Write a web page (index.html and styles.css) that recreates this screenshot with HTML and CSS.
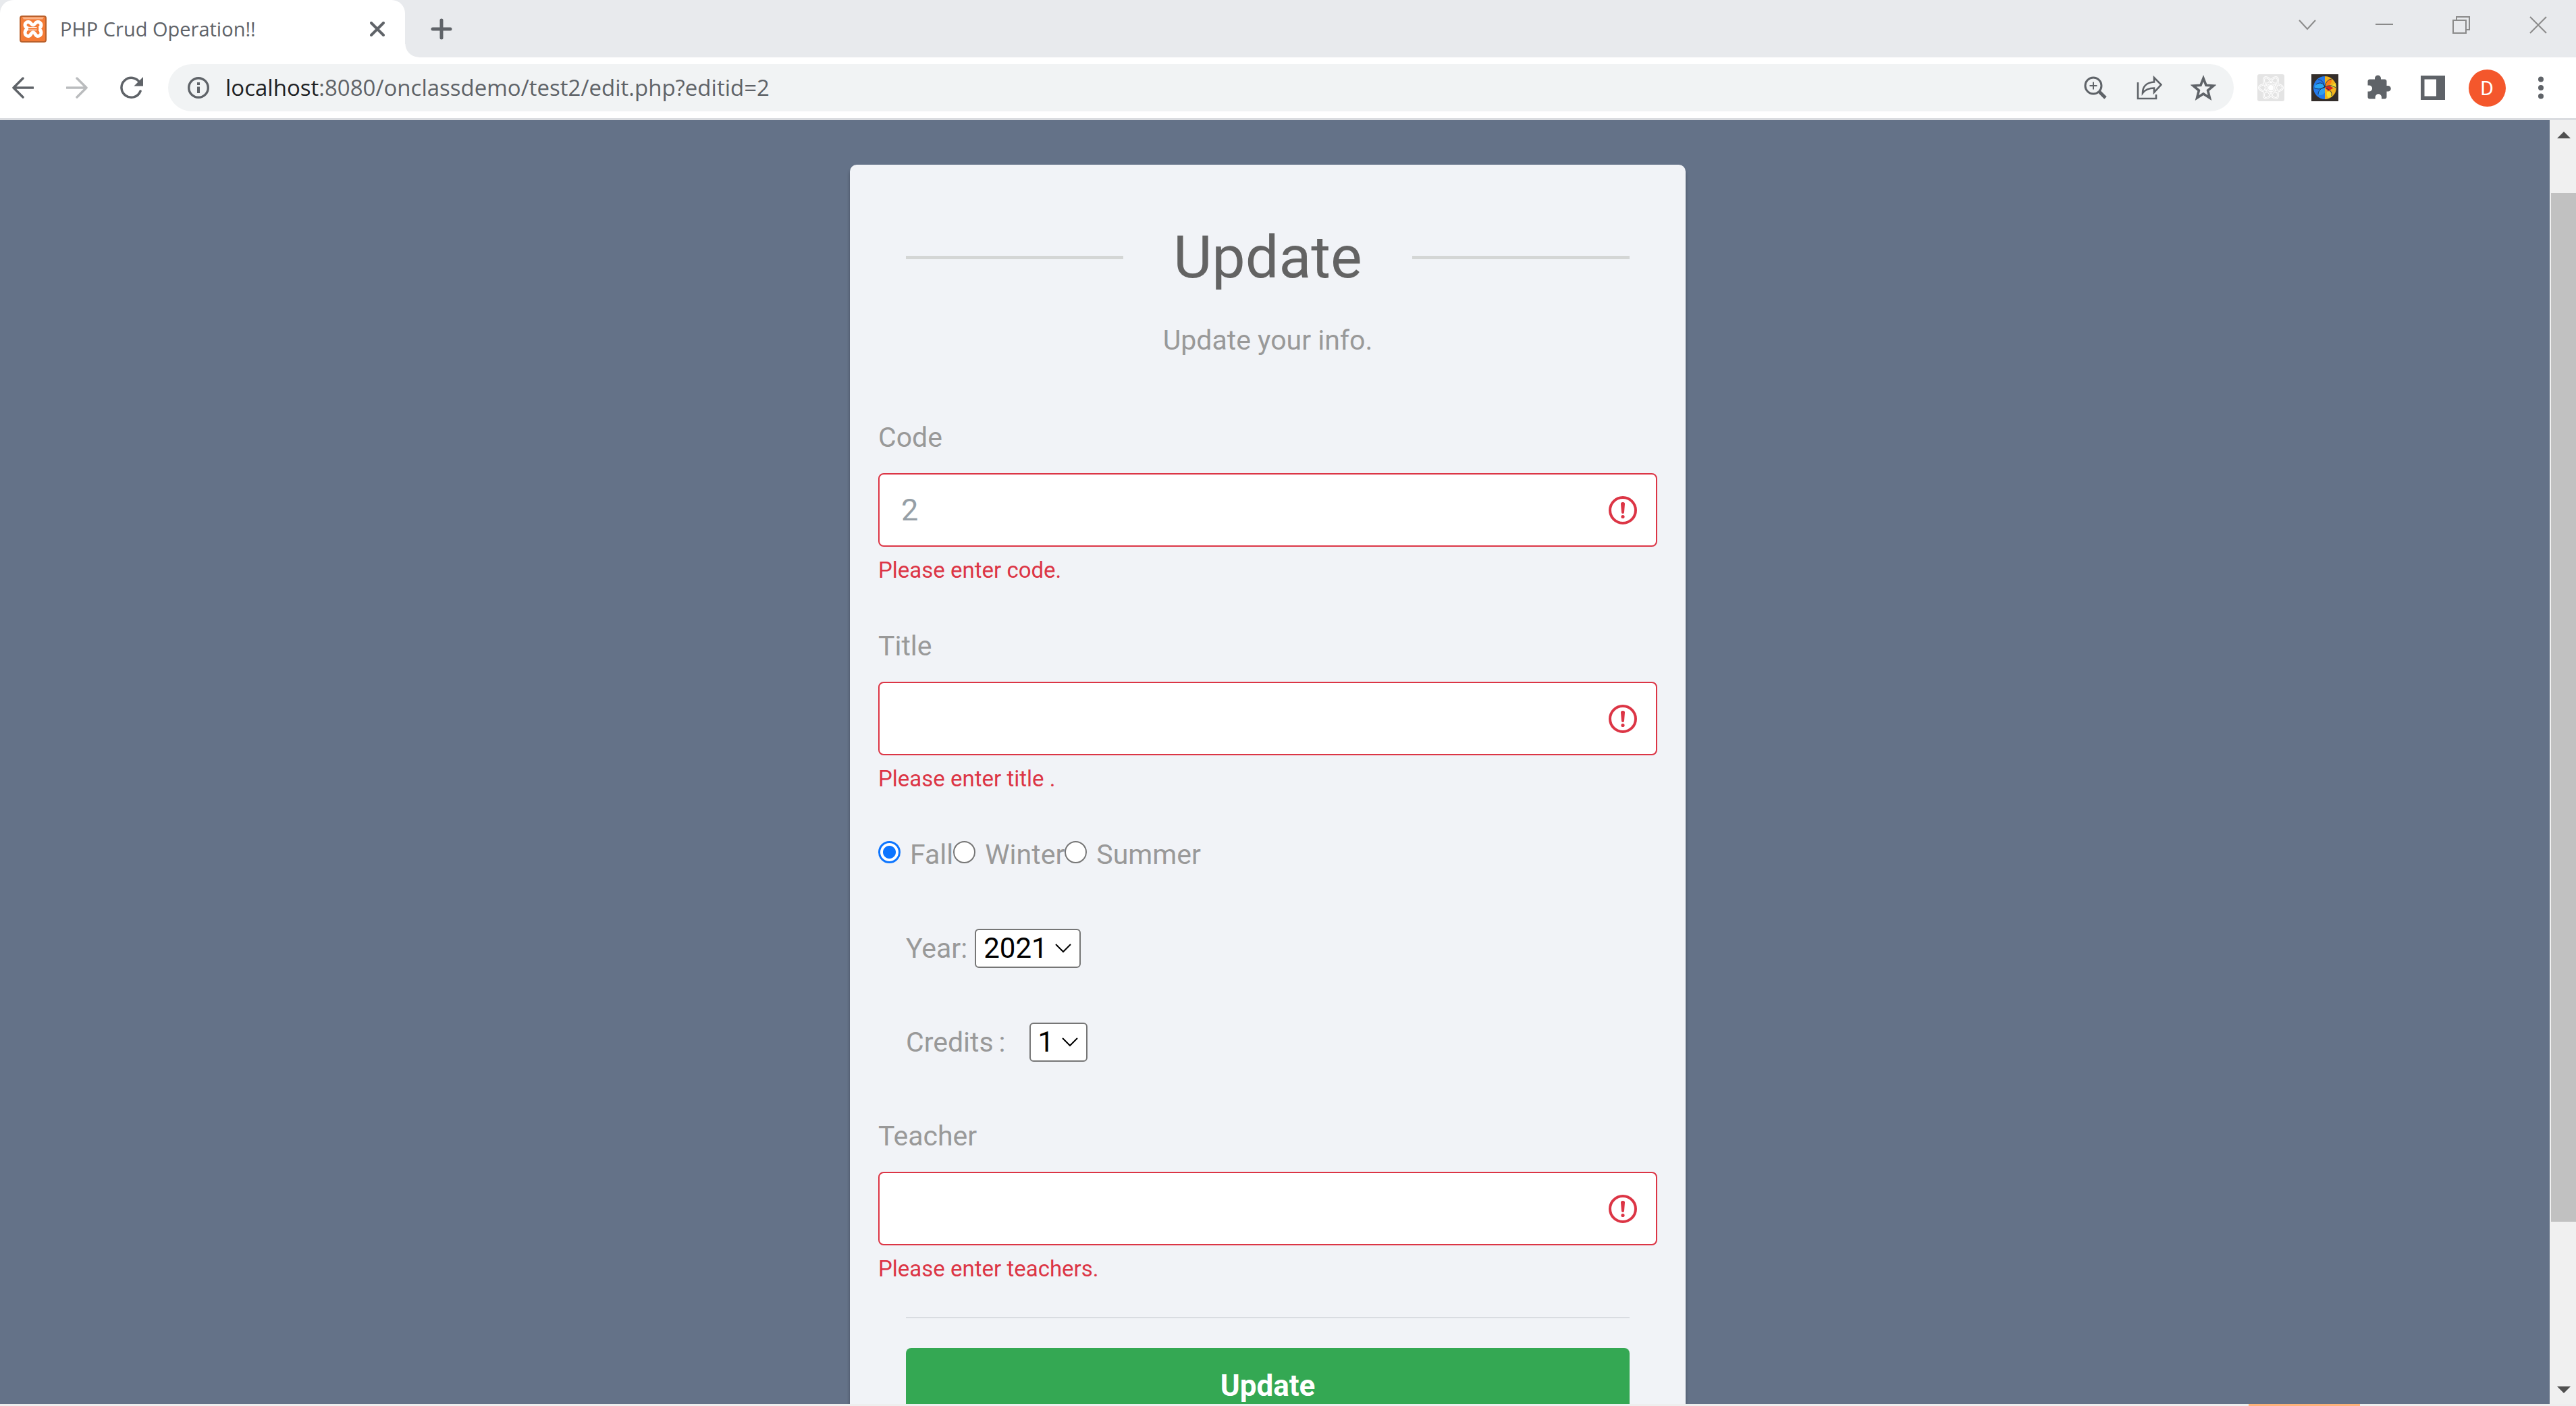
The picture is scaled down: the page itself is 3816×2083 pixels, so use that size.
FILE: index.html
```html
<!DOCTYPE html>
<html lang="en">
<head>
<meta charset="utf-8">
<title>PHP Crud Operation!!</title>
<link rel="stylesheet" href="styles.css">
</head>
<body>
<div class="browser">
  <header class="tabstrip">
    <div class="tab">
      <svg class="favicon" viewBox="0 0 40 40" aria-hidden="true">
        <rect x="1" y="1" width="38" height="38" rx="3" fill="#f47b35" stroke="#b9602b" stroke-width="2"/>
        <path d="M4 2.500h32l-2 3H6z" fill="#f9b48a"/>
        <path d="M15.500 19.500h9M15.500 19.500c-3 0-7.500-2-7.500-5.500s3-4.500 5-4.500c4 0 4 4.500 7 4.500s3-4.500 7-4.500c2 0 5 1 5 4.500s-2 4-3.500 5.500c1.500 1 3.500 2.500 3.500 6s-3 5-5 5c-4 0-3.500-5.500-7-5.500s-3 5.500-7 5.500c-2 0-5-1.500-5-5s2-5 3.500-6" fill="none" stroke="#fff" stroke-width="5" stroke-linecap="round" stroke-linejoin="round"/>
        <path d="M13 19.500h14M27 17v5" fill="none" stroke="#f47b35" stroke-width="2.500"/>
      </svg>
      <span class="tab-title">PHP Crud Operation!!</span>
      <button class="icon-button" type="button" aria-label="Close tab">
        <svg class="i22" viewBox="0 0 22 22"><path d="M2 2l18 18M20 2L2 20" stroke="#5f6368" stroke-width="4" stroke-linecap="round"/></svg>
      </button>
    </div>
    <button class="icon-button new-tab" type="button" aria-label="New tab">
      <svg class="i32" viewBox="0 0 32 32"><path d="M16 3v26M3 16h26" stroke="#5f6368" stroke-width="5" stroke-linecap="round"/></svg>
    </button>
    <div class="window-controls">
      <button class="icon-button" type="button" aria-label="Search tabs"><svg class="i26" viewBox="0 0 26 26"><path d="M1 6l12 13L25 6" fill="none" stroke="#8a8a8a" stroke-width="2"/></svg></button>
      <button class="icon-button" type="button" aria-label="Minimize"><svg class="i26" viewBox="0 0 26 26"><path d="M0 12h26" stroke="#8a8a8a" stroke-width="2"/></svg></button>
      <button class="icon-button" type="button" aria-label="Restore"><svg class="i26" viewBox="0 0 26 26"><path d="M1 6h19v19H1zM6 6V1h19v19h-5" fill="none" stroke="#8a8a8a" stroke-width="2"/></svg></button>
      <button class="icon-button" type="button" aria-label="Close"><svg class="i26" viewBox="0 0 26 26"><path d="M1 1l24 24M25 1L1 25" stroke="#8a8a8a" stroke-width="2"/></svg></button>
    </div>
  </header>

  <nav class="toolbar" aria-label="Browser toolbar">
    <div class="nav-buttons">
      <button class="icon-button" type="button" aria-label="Back"><svg class="i32" viewBox="0 0 32 32"><path d="M16 2L2 16l14 14M2 16h29" fill="none" stroke="#5f6368" stroke-width="3.500" stroke-linecap="round" stroke-linejoin="round"/></svg></button>
      <button class="icon-button" type="button" aria-label="Forward"><svg class="i32" viewBox="0 0 32 32"><path d="M16 2l14 14-14 14M30 16H1" fill="none" stroke="#babcbe" stroke-width="3.500" stroke-linecap="round" stroke-linejoin="round"/></svg></button>
      <button class="icon-button" type="button" aria-label="Reload"><svg class="i34" viewBox="0 0 34 34"><path d="M29 9.500A14.500 14.500 0 1 0 30 22" fill="none" stroke="#5f6368" stroke-width="3.500" stroke-linecap="round"/><path d="M34 1v13.500H20.500z" fill="#5f6368"/></svg></button>
    </div>
    <div class="omnibox">
      <svg class="i32" viewBox="0 0 32 32" aria-hidden="true"><circle cx="16" cy="16" r="14.300" fill="none" stroke="#5f6368" stroke-width="3.400"/><path d="M14 8h4v4h-4zM14 14.500h4V24h-4z" fill="#5f6368"/></svg>
      <span class="url"><span class="host">localhost</span>:8080/onclassdemo/test2/edit.php?editid=2</span>
      <div class="slots">
        <button class="icon-button slot" type="button" aria-label="Zoom"><svg class="i36" viewBox="0 0 36 36"><circle cx="15" cy="15" r="12" fill="none" stroke="#5f6368" stroke-width="3"/><path d="M15 9.500v11M9.500 15h11" stroke="#5f6368" stroke-width="2"/><path d="M23.500 23.500l9.500 9.500" stroke="#5f6368" stroke-width="5"/></svg></button>
        <button class="icon-button slot" type="button" aria-label="Share"><svg class="i38" viewBox="0 0 38 38"><path d="M2 11v24h27v-6" fill="none" stroke="#5f6368" stroke-width="2.600"/><path d="M9 27c0-10 6-16 17-16.500V4l10.500 10.500L26 26v-6.500c-8 0-13 2-17 7.500z" fill="none" stroke="#5f6368" stroke-width="2.600"/></svg></button>
        <button class="icon-button slot" type="button" aria-label="Bookmark this tab"><svg class="i38" viewBox="0 0 38 38"><path d="M19 5l4 10.200 11 .8-8.400 7 2.800 11L19 28l-9.400 6 2.800-11L4 16l11-.8z" fill="none" stroke="#5f6368" stroke-width="3.600"/></svg></button>
      </div>
    </div>
    <div class="slots">
      <button class="icon-button slot" type="button" aria-label="React developer tools"><svg class="i40" viewBox="0 0 40 40"><rect width="40" height="40" rx="3" fill="#e4e4e4"/><g fill="none" stroke="#fff" stroke-width="3"><ellipse cx="20" cy="20" rx="17.500" ry="6.500"/><ellipse cx="20" cy="20" rx="17.500" ry="6.500" transform="rotate(60 20 20)"/><ellipse cx="20" cy="20" rx="17.500" ry="6.500" transform="rotate(120 20 20)"/></g><g fill="none" stroke="#e4e4e4" stroke-width="1"><ellipse cx="20" cy="20" rx="17.500" ry="6.500"/><ellipse cx="20" cy="20" rx="17.500" ry="6.500" transform="rotate(60 20 20)"/><ellipse cx="20" cy="20" rx="17.500" ry="6.500" transform="rotate(120 20 20)"/></g><circle cx="20" cy="20" r="4" fill="#fff"/></svg></button>
      <button class="icon-button slot" type="button" aria-label="Brain extension"><svg class="i40" viewBox="0 0 40 40"><rect width="40" height="40" fill="#332d2a"/><path d="M20 3a17 17 0 0 0 0 34z" fill="#2479ea"/><path d="M20 3a17 17 0 0 1 0 34z" fill="#f3b31c"/><path d="M7 15c7-3 11-1 13 4-5 3-10 3-16 1z" fill="#27a5f5"/><path d="M10 30c0-6 5-10 10-10v7c-3 4-6 5-10 3z" fill="#2f9df0"/><path d="M20 19c1-8 5-12 10-12 1 6-3 10-10 12z" fill="#fb7d14"/><path d="M20 20c5-4 10-4 13 0l-8 5z" fill="#d9231c"/><path d="M28 18l8-5c1 6-1 9-8 5zM23 26c5-1 8 1 8 6l-6 3c-2-2-3-5-2-9z" fill="#f7e02d"/><path d="M4 20c6 3 11 2 16-1-2-6-7-8-13-4M10 30c0-6 5-10 10-11M10 8c6 0 8 5 10 11M30 7c-6 1-9 5-10 12 5-3 11-3 16 1M22 21c6 2 9 6 8 11" fill="none" stroke="#17345c" stroke-width="1"/></svg></button>
      <button class="icon-button slot" type="button" aria-label="Extensions"><svg class="i40" viewBox="0 0 40 40"><path d="M6.500 7.500h7.500V6a4.500 4.500 0 0 1 9 0v1.500h5.500a3 3 0 0 1 3 3V17h2a4.300 4.300 0 0 1 0 8.600h-2v8a3 3 0 0 1-3 3H24V34a4.700 4.700 0 0 0-9.400 0v2.600H6.500a3 3 0 0 1-3-3v-8H5.500a4.600 4.600 0 0 0 0-9.200h-2v-6a3 3 0 0 1 3-2.900z" fill="#5f6368"/></svg></button>
      <button class="icon-button slot" type="button" aria-label="Side panel"><svg class="i36" viewBox="0 0 36 36"><path fill-rule="evenodd" d="M0 0h36v36H0zM5.500 5.500v25H23v-25z" fill="#5f6368"/></svg></button>
      <button class="icon-button slot" type="button" aria-label="Profile"><span class="avatar">D</span></button>
      <button class="icon-button slot" type="button" aria-label="Menu"><svg class="i36" viewBox="0 0 36 36"><g fill="#5f6368"><circle cx="18" cy="5.500" r="4"/><circle cx="18" cy="18" r="4"/><circle cx="18" cy="30.500" r="4"/></g></svg></button>
    </div>
  </nav>

  <div class="viewport">
    <main class="page">
      <form class="card">
        <div class="inset">
          <h1 class="title">Update</h1>
          <p class="subtitle">Update your info.</p>
        </div>

        <div class="field">
          <label for="code">Code</label>
          <div class="control">
            <input id="code" class="text-input" type="text" placeholder="2">
            <svg class="invalid" viewBox="0 0 42 42" aria-hidden="true"><circle cx="21" cy="21" r="19" fill="none" stroke="#dc3545" stroke-width="4"/><path d="M18 11.500a2.500 2.500 0 0 1 2.500-2.500h1A2.500 2.500 0 0 1 24 11.500L23 24a2 2 0 0 1-4 0z" fill="#dc3545"/><circle cx="21" cy="30.500" r="2.600" fill="#dc3545"/></svg>
          </div>
          <p class="error">Please enter code.</p>
        </div>

        <div class="field">
          <label for="title">Title</label>
          <div class="control">
            <input id="title" class="text-input" type="text">
            <svg class="invalid" viewBox="0 0 42 42" aria-hidden="true"><circle cx="21" cy="21" r="19" fill="none" stroke="#dc3545" stroke-width="4"/><path d="M18 11.500a2.500 2.500 0 0 1 2.500-2.500h1A2.500 2.500 0 0 1 24 11.500L23 24a2 2 0 0 1-4 0z" fill="#dc3545"/><circle cx="21" cy="30.500" r="2.600" fill="#dc3545"/></svg>
          </div>
          <p class="error">Please enter title .</p>
        </div>

        <div class="row terms">
          <label class="term"><input class="radio" type="radio" name="term" checked>Fall</label><label class="term"><input class="radio" type="radio" name="term">Winter</label><label class="term"><input class="radio" type="radio" name="term">Summer</label>
        </div>

        <div class="row inset">
          <label for="year">Year:</label>
          <span class="select-wrap">
            <select id="year" class="select"><option>2021</option><option>2022</option></select>
            <svg class="chevron" viewBox="0 0 24 14" aria-hidden="true"><path d="M1 1l11 11L23 1" fill="none" stroke="#000" stroke-width="2"/></svg>
          </span>
        </div>

        <div class="row inset">
          <label for="credits" class="credits-label"><span>Credits</span><span>:</span></label>
          <span class="select-wrap">
            <select id="credits" class="select"><option>1</option><option>2</option><option>3</option></select>
            <svg class="chevron" viewBox="0 0 24 14" aria-hidden="true"><path d="M1 1l11 11L23 1" fill="none" stroke="#000" stroke-width="2"/></svg>
          </span>
        </div>

        <div class="field last">
          <label for="teacher">Teacher</label>
          <div class="control">
            <input id="teacher" class="text-input" type="text">
            <svg class="invalid" viewBox="0 0 42 42" aria-hidden="true"><circle cx="21" cy="21" r="19" fill="none" stroke="#dc3545" stroke-width="4"/><path d="M18 11.500a2.500 2.500 0 0 1 2.500-2.500h1A2.500 2.500 0 0 1 24 11.500L23 24a2 2 0 0 1-4 0z" fill="#dc3545"/><circle cx="21" cy="30.500" r="2.600" fill="#dc3545"/></svg>
          </div>
          <p class="error">Please enter teachers.</p>
        </div>

        <div class="inset">
          <hr class="divider">
          <button class="submit" type="submit">Update</button>
        </div>
      </form>
    </main>
    <div class="scrollbar" aria-hidden="true">
      <div class="track-top"><svg class="arrow" viewBox="0 0 20 10"><path d="M10 0l10 10H0z" fill="#505050"/></svg></div>
      <div class="thumb"></div>
      <div class="track-bottom"><svg class="arrow" viewBox="0 0 20 10"><path d="M0 0h20L10 10z" fill="#505050"/></svg></div>
    </div>
  </div>
  <footer class="taskbar-edge"><div class="taskbar-active"></div></footer>
</div>
</body>
</html>
```
FILE: styles.css
```css
* { box-sizing: border-box; }
body { margin: 0; background: #fff; font-family: Roboto, sans-serif; }
h1, p { margin: 0; }
svg { display: block; flex: none; }

.browser { display: flex; flex-direction: column; height: 100vh; overflow: hidden; }
.icon-button { display: flex; align-items: center; justify-content: center; padding: 0; border: 0; background: none; font: inherit; }
.i22 { width: 22px; height: 22px; }
.i26 { width: 26px; height: 26px; }
.i32 { width: 32px; height: 32px; }
.i34 { width: 34px; height: 34px; }
.i36 { width: 36px; height: 36px; }
.i38 { width: 38px; height: 38px; }
.i40, .favicon { width: 40px; height: 40px; }

/* Tab strip */
.tabstrip { display: flex; align-items: center; flex: none; height: 85px; background: #e8eaed; }
.tab { position: relative; display: flex; align-items: center; width: 600px; height: 100%; padding: 0 30px 0 29px; border-radius: 20px 20px 0 0; background: #fff; }
.tab::after { content: ""; position: absolute; left: 100%; bottom: 0; width: 20px; height: 20px; background: radial-gradient(circle at 100% 0, transparent 19px, #fff 20px); }
.tab-title { flex: 1; margin-left: 20px; font: 29px/40px "Open Sans", sans-serif; color: #5f6368; white-space: nowrap; }
.new-tab { margin-left: 38px; }
.window-controls { display: flex; gap: 88px; height: 74px; margin-left: auto; padding-right: 43px; align-self: flex-start; }

/* Toolbar */
.toolbar { display: flex; align-items: center; flex: none; height: 93px; padding: 0 12px 0 18px; border-bottom: 3px solid #dadce0; background: #fff; }
.nav-buttons { display: flex; gap: 48px; margin-right: 37px; }
.omnibox { display: flex; align-items: center; flex: 1; height: 70px; margin-right: 15px; padding: 0 5px 0 29px; border-radius: 35px; background: #f1f3f4; }
.url { flex: 1; margin-left: 24px; font: 33px/48px "Open Sans", sans-serif; color: #5f6368; white-space: nowrap; }
.host { color: #202124; }
.slots { display: flex; align-items: center; }
.slot { width: 80px; height: 60px; }
.avatar { width: 55px; height: 55px; border-radius: 50%; background: #f4572c; color: #fff; font-size: 30px; line-height: 55px; text-align: center; }

/* Page */
.viewport { display: flex; flex: 1; min-height: 0; }
.page { flex: 1; min-width: 0; padding: 66px 21px 0 0; overflow: hidden; background: #647288; }
.card { max-width: 1238px; margin: 0 auto; padding: 80px 42px; border-radius: 10px; background: #f1f3f7; box-shadow: 0 5px 5px rgba(0, 0, 0, .3); color: #999; font-size: 41px; line-height: 60px; }
.inset { margin: 0 41px; }
.title { display: flex; align-items: center; justify-content: space-between; font-size: 88px; font-weight: 400; line-height: 114px; color: #636363; }
.title::before, .title::after { content: ""; width: 30%; height: 5px; background: #d4d6d5; }
.subtitle { margin: 36px 0 84px; text-align: center; }

.field { margin-bottom: 57px; }
.field label { display: block; }
.field.last { margin-bottom: 46px; }
.control { position: relative; margin: 23px 0 10px; }
.text-input { display: block; width: 100%; height: 109px; padding: 0 110px 0 32px; border: 2px solid #dc3545; border-radius: 8px; background: #fff; color: #495057; font: 45px/60px Roboto, sans-serif; }
.text-input::placeholder { color: #969fa6; opacity: 1; }
.invalid { position: absolute; top: 34px; right: 30px; width: 42px; height: 42px; }
.error { font-size: 33px; line-height: 50px; color: #dc3545; }

.row { display: flex; align-items: center; margin-bottom: 79px; height: 60px; }
.term { display: flex; }
.radio { appearance: none; width: 33px; height: 33px; margin: 10px 14px 0 0; border: 2px solid #767676; border-radius: 50%; background: #fff; }
.radio:checked { border: 3px solid #0d75ff; background: radial-gradient(circle, #0d75ff 9px, #fff 10px); }
.select-wrap { position: relative; margin-left: 11px; }
.select { display: block; appearance: none; height: 58px; padding: 0 47px 0 11px; border: 2px solid #767676; border-radius: 6px; background: #fff; color: #000; font: 42px/54px Roboto, sans-serif; }
.chevron { position: absolute; top: 22px; right: 14px; width: 24px; height: 14px; pointer-events: none; }
.credits-label { display: flex; gap: 8px; margin-right: 24px; }

.divider { height: 2px; margin: 0 0 44px; border: 0; background: #d9dce1; }
.submit { width: 100%; height: 112px; border: 0; border-radius: 8px; background: #34a853; color: #fff; font: bold 44px/60px Roboto, sans-serif; }

/* Scrollbar */
.scrollbar { display: flex; flex-direction: column; flex: none; width: 39px; padding-left: 2px; background: #f0f0f0; }
.arrow { width: 20px; height: 10px; }
.track-top { flex: 91; display: flex; justify-content: center; padding-top: 17px; }
.thumb { flex: 1524; background: #c1c1c1; }
.track-bottom { flex: 254; display: flex; align-items: flex-end; justify-content: center; padding-bottom: 16px; }

.taskbar-edge { display: flex; justify-content: flex-end; flex: none; height: 3px; padding-right: 320px; background: #eee; }
.taskbar-active { width: 165px; background: #ffb27a; }
```
